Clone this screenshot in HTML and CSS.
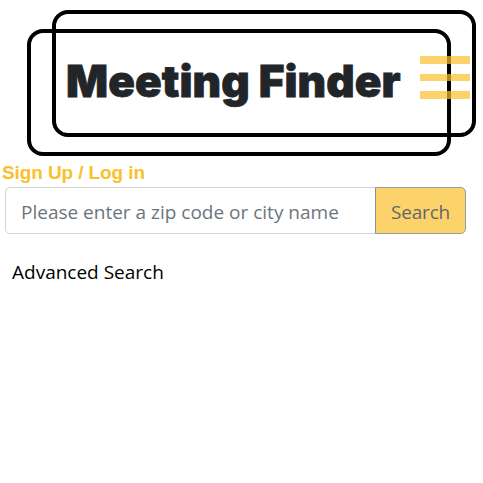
FILE: index.html
```html
<!DOCTYPE html>
<html lang="en">
<head>
<meta charset="utf-8">
<title>Meeting Finder</title>
<link rel="stylesheet" href="styles.css">
</head>
<body>
<header class="banner">
  <div class="frame frame-back"></div>
  <div class="frame frame-front"></div>
  <h1 class="title">Meeting Finder</h1>
  <button class="menu" aria-label="Menu">
    <span class="bar"></span><span class="bar bar-middle"></span><span class="bar"></span>
  </button>
</header>
<a class="account">Sign Up / Log in</a>
<form class="search">
  <input class="field" type="text" placeholder="Please enter a zip code or city name">
  <button class="submit" type="button">Search</button>
</form>
<a class="advanced">Advanced Search</a>
</body>
</html>
```
FILE: styles.css
```css
* { box-sizing: border-box; }
body {
  margin: 0;
  background: #fff;
  font-family: "Open Sans", "Noto Sans", sans-serif;
  overflow: hidden;
}
.banner {
  display: grid;
  height: 160px;
  justify-items: start;
  align-items: start;
}
.banner > * { grid-area: 1 / 1; }
.frame {
  width: 424px;
  height: 127px;
  border: 4px solid #000;
  border-radius: 16px;
}
.frame-back { margin: 10px 0 0 52px; }
.frame-front { margin: 29px 0 0 27px; }
.title {
  margin: 54px 0 0 66px;
  color: #212529;
  font: 900 44px/54px Inter, sans-serif;
  letter-spacing: 0.1px;
  -webkit-text-stroke: 0.8px #212529;
  white-space: nowrap;
}
.menu {
  display: flex;
  flex-direction: column;
  justify-content: space-between;
  width: 50px;
  height: 43px;
  margin: 56px 0 0 420px;
  padding: 0;
  border: 0;
  background: none;
  opacity: 0.7;
}
.bar { height: 8px; width: 50px; background: #fbc02d; }
.bar-middle { height: 7px; }
.account {
  display: block;
  height: 27px;
  padding-left: 2px;
  color: #fbc02d;
  font: bold 19px/25px "Liberation Sans", Arial, sans-serif;
  letter-spacing: -0.1px;
}
.search { display: flex; width: 461px; height: 47px; margin-left: 5px; }
.field, .submit {
  font: 19px/27px "Open Sans", "Noto Sans", sans-serif;
  height: 47px;
}
.field {
  flex: 1;
  min-width: 0;
  padding: 2px 15px 0 15px;
  border: 1px solid #ced4da;
  border-radius: 5px 0 0 5px;
  background: #fff;
}
.field::placeholder { color: #6c757d; opacity: 1; }
.submit {
  width: 91px;
  margin-left: -1px;
  padding: 3px 0 0;
  border: 1px solid #6c757d;
  border-radius: 0 5px 5px 0;
  background: #fbc02d;
  color: #212529;
  letter-spacing: -0.2px;
  opacity: 0.7;
}
.advanced {
  display: block;
  margin: 25px 0 0 12px;
  color: #000;
  font-size: 19px;
  line-height: 27px;
}
```
